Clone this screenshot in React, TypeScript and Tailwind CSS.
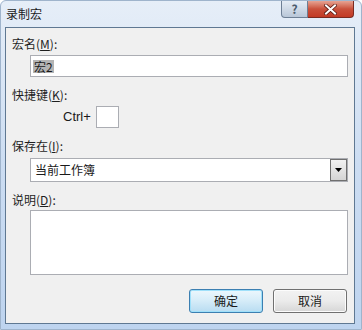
const font = { fontFamily: '"Noto Sans CJK SC", "Liberation Sans", sans-serif' }

function Label({ text, keyChar }: { text: string; keyChar: string }) {
  return (
    <div className="h-[14px] text-[12px] leading-[14px] text-[#1e1e1e]">
      {text}(<span className="underline underline-offset-1">{keyChar}</span>):
    </div>
  )
}

export default function App() {
  return (
    <div
      className="w-[362px] h-[330px] flex flex-col bg-gradient-to-b from-[#e6eef8] via-[#ccddf2] to-[#bed4ef] rounded-t-[6px] border border-[#9fb4cc]"
      style={font}
    >
      {/* title bar */}
      <div className="h-[26px] flex items-start justify-between pl-[5px] pr-[7px]">
        <div className="pt-[6px] text-[12px] leading-[14px] text-[#1a1a1a]">录制宏</div>
        <div className="flex">
          <div className="w-[27px] h-[17px] flex items-center justify-center border border-[#6d7f95] border-t-0 rounded-bl-[4px] bg-gradient-to-b from-[#e5ecf5] to-[#b9c7d8] text-[12px] font-bold text-[#4b5a6c]">
            ?
          </div>
          <div className="w-[46px] h-[17px] flex items-center justify-center border border-[#7a2a20] border-t-0 border-l-0 rounded-br-[4px] bg-gradient-to-b from-[#e6a393] via-[#c9503b] to-[#c23a25]">
            <svg width="13" height="11" viewBox="0 0 13 11">
              <path d="M2 1.5 L11 9.5 M11 1.5 L2 9.5" stroke="#5a1a12" strokeWidth="3.6" strokeLinecap="square" />
              <path d="M2 1.5 L11 9.5 M11 1.5 L2 9.5" stroke="#ffffff" strokeWidth="2" strokeLinecap="square" />
            </svg>
          </div>
        </div>
      </div>

      {/* client area */}
      <div className="ml-[4px] mr-[6px] mb-[5px] flex-1 border border-[#5f7892] bg-[#f0f0f0] pl-[6px] pr-[6px] pt-[9px] flex flex-col">
        <Label text="宏名" keyChar="M" />
        <div className="ml-[18px] mt-[4px] h-[22px] bg-white border border-[#abadb3] flex items-center pl-[2px]">
          <span className="bg-[#b4b4b4] text-[12px] leading-[13px] px-[1px] text-[#1a1a1a]">宏2</span>
        </div>

        <div className="mt-[11px]">
          <Label text="快捷键" keyChar="K" />
        </div>
        <div className="mt-[4px] h-[22px] flex items-center pl-[51px]">
          <span className="text-[13px] leading-[14px] text-[#1a1a1a]" style={{ fontFamily: '"Liberation Sans", sans-serif' }}>
            Ctrl+
          </span>
          <div className="ml-[5px] w-[23px] h-[22px] bg-white border border-[#abadb3]" />
        </div>

        <div className="mt-[11px]">
          <Label text="保存在" keyChar="I" />
        </div>
        <div className="ml-[18px] mt-[5px] h-[24px] bg-white border border-[#abadb3] flex items-center">
          <span className="flex-1 pl-[4px] text-[12px] leading-[14px] text-[#1a1a1a]">当前工作簿</span>
          <div className="w-[17px] h-[22px] border border-[#707070] bg-gradient-to-b from-[#f2f2f2] to-[#d4d4d4] flex items-center justify-center">
            <svg width="7" height="4" viewBox="0 0 7 4">
              <path d="M0 0 H7 L3.5 4 Z" fill="#000" />
            </svg>
          </div>
        </div>

        <div className="mt-[11px]">
          <Label text="说明" keyChar="D" />
        </div>
        <div className="ml-[18px] mt-[3px] h-[65px] bg-white border border-[#abadb3]" />

        <div className="mt-[14px] flex justify-end gap-[10px] pr-[1px]">
          <div className="w-[74px] h-[24px] rounded-[3px] border border-[#3c7fb1] bg-gradient-to-b from-[#ecf7fd] via-[#d5ecf8] to-[#b8dcf1] shadow-[inset_0_0_0_1px_#9fe0fa] flex items-center justify-center text-[12px] text-[#1a1a1a]">
            确定
          </div>
          <div className="w-[74px] h-[24px] rounded-[3px] border border-[#707070] bg-gradient-to-b from-[#f2f2f2] via-[#ebebeb] to-[#d6d6d6] shadow-[inset_0_0_0_1px_#fcfcfc] flex items-center justify-center text-[12px] text-[#1a1a1a]">
            取消
          </div>
        </div>
      </div>
    </div>
  )
}
